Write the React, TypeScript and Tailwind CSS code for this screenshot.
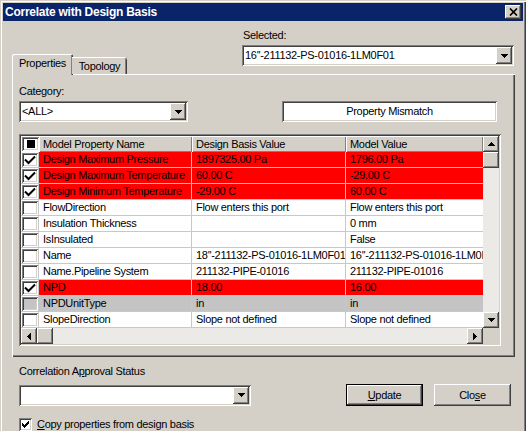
import React from 'react';

const raised =
  'shadow-[inset_-1px_-1px_#404040,inset_1px_1px_#ffffff,inset_-2px_-2px_#808080,inset_2px_2px_#d4d0c8]';
const sunken =
  'shadow-[inset_1px_1px_#808080,inset_-1px_-1px_#ffffff,inset_2px_2px_#404040,inset_-2px_-2px_#d4d0c8]';

const DownArrow = () => (
  <svg width="7" height="4" viewBox="0 0 7 4" shapeRendering="crispEdges">
    <rect x="0" y="0" width="7" height="1" fill="#000" />
    <rect x="1" y="1" width="5" height="1" fill="#000" />
    <rect x="2" y="2" width="3" height="1" fill="#000" />
    <rect x="3" y="3" width="1" height="1" fill="#000" />
  </svg>
);
const UpArrow = () => (
  <svg width="7" height="4" viewBox="0 0 7 4" shapeRendering="crispEdges">
    <rect x="3" y="0" width="1" height="1" fill="#000" />
    <rect x="2" y="1" width="3" height="1" fill="#000" />
    <rect x="1" y="2" width="5" height="1" fill="#000" />
    <rect x="0" y="3" width="7" height="1" fill="#000" />
  </svg>
);
const LeftArrow = () => (
  <svg width="4" height="7" viewBox="0 0 4 7" shapeRendering="crispEdges">
    <rect x="3" y="0" width="1" height="7" fill="#000" />
    <rect x="2" y="1" width="1" height="5" fill="#000" />
    <rect x="1" y="2" width="1" height="3" fill="#000" />
    <rect x="0" y="3" width="1" height="1" fill="#000" />
  </svg>
);
const RightArrow = () => (
  <svg width="4" height="7" viewBox="0 0 4 7" shapeRendering="crispEdges">
    <rect x="0" y="0" width="1" height="7" fill="#000" />
    <rect x="1" y="1" width="1" height="5" fill="#000" />
    <rect x="2" y="2" width="1" height="3" fill="#000" />
    <rect x="3" y="3" width="1" height="1" fill="#000" />
  </svg>
);

const Check = ({ big }: { big?: boolean }) =>
  big ? (
    <svg width="12" height="10" viewBox="0 0 12 10">
      <polyline points="1,4.5 4.5,8 11,1.5" fill="none" stroke="#000" strokeWidth="2" />
    </svg>
  ) : (
    <svg width="7" height="7" viewBox="0 0 7 7" shapeRendering="crispEdges">
      <rect x="0" y="2" width="1" height="3" fill="#000" />
      <rect x="1" y="3" width="1" height="3" fill="#000" />
      <rect x="2" y="4" width="1" height="3" fill="#000" />
      <rect x="3" y="3" width="1" height="3" fill="#000" />
      <rect x="4" y="2" width="1" height="3" fill="#000" />
      <rect x="5" y="1" width="1" height="3" fill="#000" />
      <rect x="6" y="0" width="1" height="3" fill="#000" />
    </svg>
  );

function Combo({ className, text }: { className: string; text: string }) {
  return (
    <div className={`${className} ${sunken} bg-white h-[21px] flex items-stretch p-[2px]`}>
      <div className="flex-1 flex items-center pl-[1px] whitespace-nowrap overflow-hidden">{text}</div>
      <div className={`w-[16px] bg-[#d4d0c8] ${raised} flex items-center justify-center`}>
        <DownArrow />
      </div>
    </div>
  );
}

type Row = { c: boolean; n: string; d: string; m: string; t?: 'red' | 'gray' };
const rows: Row[] = [
  { c: true, n: 'Design Maximum Pressure', d: '1897325.00 Pa', m: '1796.00 Pa', t: 'red' },
  { c: true, n: 'Design Maximum Temperature', d: '60.00 C', m: '-29.00 C', t: 'red' },
  { c: true, n: 'Design Minimum Temperature', d: '-29.00 C', m: '60.00 C', t: 'red' },
  { c: false, n: 'FlowDirection', d: 'Flow enters this port', m: 'Flow enters this port' },
  { c: false, n: 'Insulation Thickness', d: '', m: '0 mm' },
  { c: false, n: 'IsInsulated', d: '', m: 'False' },
  { c: false, n: 'Name', d: "18''-211132-PS-01016-1LM0F01", m: "16''-211132-PS-01016-1LM0F01" },
  { c: false, n: 'Name.Pipeline System', d: '211132-PIPE-01016', m: '211132-PIPE-01016' },
  { c: true, n: 'NPD', d: '18.00', m: '16.00', t: 'red' },
  { c: false, n: 'NPDUnitType', d: 'in', m: 'in', t: 'gray' },
  { c: false, n: 'SlopeDirection', d: 'Slope not defined', m: 'Slope not defined' },
];

const headCell = `bg-[#d4d0c8] shadow-[inset_1px_1px_#ffffff,inset_-1px_-1px_#808080] flex items-center pl-[4px] whitespace-nowrap overflow-hidden`;

function GridRow({ r }: { r: Row }) {
  const bg = r.t === 'red' ? 'bg-[#ff0000]' : r.t === 'gray' ? 'bg-[#c4c4c4]' : 'bg-white';
  const boxBg = r.t === 'gray' ? 'bg-[#c4c4c4]' : 'bg-white';
  const cell = `${bg} border-r border-b border-[#c8c8c8] flex items-center pl-[4px] whitespace-nowrap overflow-hidden`;
  return (
    <div className="flex h-[16px]">
      <div className="w-[18px] bg-white border-r border-b border-[#c8c8c8] p-[1px] pr-0 pb-0 flex">
        <div className={`flex-1 ${boxBg} ${sunken} flex items-center justify-center`}>
          {r.c && <Check big />}
        </div>
      </div>
      <div className={`w-[153px] ${cell}`}>{r.n}</div>
      <div className={`w-[154px] ${cell}`}>{r.d}</div>
      <div className={`w-[137px] ${cell} border-r-0`}>{r.m}</div>
    </div>
  );
}

export default function App() {
  return (
    <div className="w-[526px] h-[431px] overflow-hidden bg-[#d4d0c8] pt-[3px] pl-[3px] font-['Liberation_Sans',Arial,sans-serif] text-[11px] leading-[13px] tracking-[-0.3px] text-black shadow-[inset_1px_1px_#d4d0c8,inset_2px_2px_#ffffff,inset_-1px_0_#404040,inset_-2px_0_#808080]">
      <div className="w-[520px] flex flex-col">
        {/* Title bar */}
        <div className="h-[18px] bg-[#0a246a] flex items-center justify-between pl-[2px] pr-[2px]">
          <span className="text-white font-bold text-[12px] tracking-[-0.25px] leading-[14px]">
            Correlate with Design Basis
          </span>
          <div className={`w-[16px] h-[14px] bg-[#d4d0c8] ${raised} flex items-center justify-center`}>
            <svg width="9" height="8" viewBox="0 0 9 8">
              <path d="M1 0.5 L8 7.5 M8 0.5 L1 7.5" stroke="#000" strokeWidth="1.7" />
            </svg>
          </div>
        </div>

        {/* Header: tabs + selected */}
        <div className="flex h-[53px]">
          <div className="self-end ml-[9px] flex items-end relative z-10 -mb-px">
            <div className="w-[61px] h-[21px] bg-[#d4d0c8] rounded-tl-[2px] rounded-tr-[2px] shadow-[inset_1px_1px_#ffffff,inset_-1px_0_#404040,inset_-2px_0_#808080] flex justify-center pt-[3px]">
              Properties
            </div>
            <div className="w-[55px] h-[17px] mb-[1px] -ml-px bg-[#d4d0c8] rounded-tr-[2px] shadow-[inset_0_1px_#ffffff,inset_-1px_0_#404040,inset_-2px_0_#808080] flex justify-center pt-[3px]">
              Topology
            </div>
          </div>
          <div className="ml-auto mr-[9px] pt-[8px] flex flex-col">
            <div className="pl-[1px] h-[13px]">Selected:</div>
            <Combo className="w-[272px] mt-[3px]" text="16''-211132-PS-01016-1LM0F01" />
          </div>
        </div>

        {/* Tab panel */}
        <div className="ml-[9px] w-[503px] h-[283px] border-t border-l border-white shadow-[inset_-1px_-1px_#404040,inset_-2px_-2px_#808080] flex flex-col pl-[6px] pt-[10px]">
          <div className="h-[13px]">Category:</div>
          <div className="flex mt-[3px]">
            <Combo className="w-[169px]" text="<ALL>" />
            <div className={`ml-[94px] w-[215px] h-[21px] bg-white ${sunken} flex items-center justify-center`}>
              Property Mismatch
            </div>
          </div>

          {/* Grid */}
          <div className={`mt-[12px] w-[482px] h-[212px] ${sunken} p-[2px] flex flex-col bg-[#d4d0c8]`}>
            <div className="flex h-[192px]">
              <div className="w-[462px] flex flex-col">
                <div className="flex h-[16px]">
                  <div className="w-[18px] bg-white p-[1px] pr-0 flex">
                    <div className={`flex-1 bg-white ${sunken} flex items-center justify-center`}>
                      <div className="w-[8px] h-[8px] bg-black" />
                    </div>
                  </div>
                  <div className={`w-[153px] ${headCell}`}>Model Property Name</div>
                  <div className={`w-[154px] ${headCell}`}>Design Basis Value</div>
                  <div className={`w-[137px] ${headCell}`}>Model Value</div>
                </div>
                {rows.map((r, i) => (
                  <GridRow key={i} r={r} />
                ))}
              </div>
              <div className="w-[16px] flex flex-col bg-[#ebeae6]">
                <div className={`h-[16px] bg-[#d4d0c8] ${raised} flex items-center justify-center`}>
                  <UpArrow />
                </div>
                <div className={`h-[16px] bg-[#d4d0c8] ${raised}`} />
                <div className="flex-1" />
                <div className={`h-[16px] bg-[#d4d0c8] ${raised} flex items-center justify-center`}>
                  <DownArrow />
                </div>
              </div>
            </div>
            <div className="flex h-[16px]">
              <div className="w-[462px] flex bg-[#ebeae6]">
                <div className={`w-[16px] bg-[#d4d0c8] ${raised} flex items-center justify-center`}>
                  <LeftArrow />
                </div>
                <div className={`w-[16px] bg-[#d4d0c8] ${raised}`} />
                <div className="flex-1" />
                <div className={`w-[16px] bg-[#d4d0c8] ${raised} flex items-center justify-center`}>
                  <RightArrow />
                </div>
              </div>
              <div className="w-[16px] bg-[#d4d0c8]" />
            </div>
          </div>
        </div>

        {/* Bottom area */}
        <div className="ml-[16px] mt-[8px] h-[13px]">
          Correlation A<span className="underline">p</span>proval Status
        </div>
        <div className="flex items-center mt-[6px] ml-[16px]">
          <Combo className="w-[232px]" text="" />
          <div className="ml-[95px] w-[77px] h-[22px] border border-black bg-[#d4d0c8]">
            <div className={`w-full h-full ${raised} flex items-center justify-center`}>
              <span>
                <span className="underline">U</span>pdate
              </span>
            </div>
          </div>
          <div className={`ml-[11px] w-[77px] h-[22px] bg-[#d4d0c8] ${raised} flex items-center justify-center`}>
            <span>
              Clo<span className="underline">s</span>e
            </span>
          </div>
        </div>
        <div className="flex items-center mt-[12px] ml-[16px]">
          <div className={`w-[13px] h-[13px] bg-white ${sunken} flex items-center justify-center`}>
            <Check />
          </div>
          <div className="ml-[5px]">
            <span className="underline">C</span>opy properties from design basis
          </div>
        </div>
      </div>
    </div>
  );
}
